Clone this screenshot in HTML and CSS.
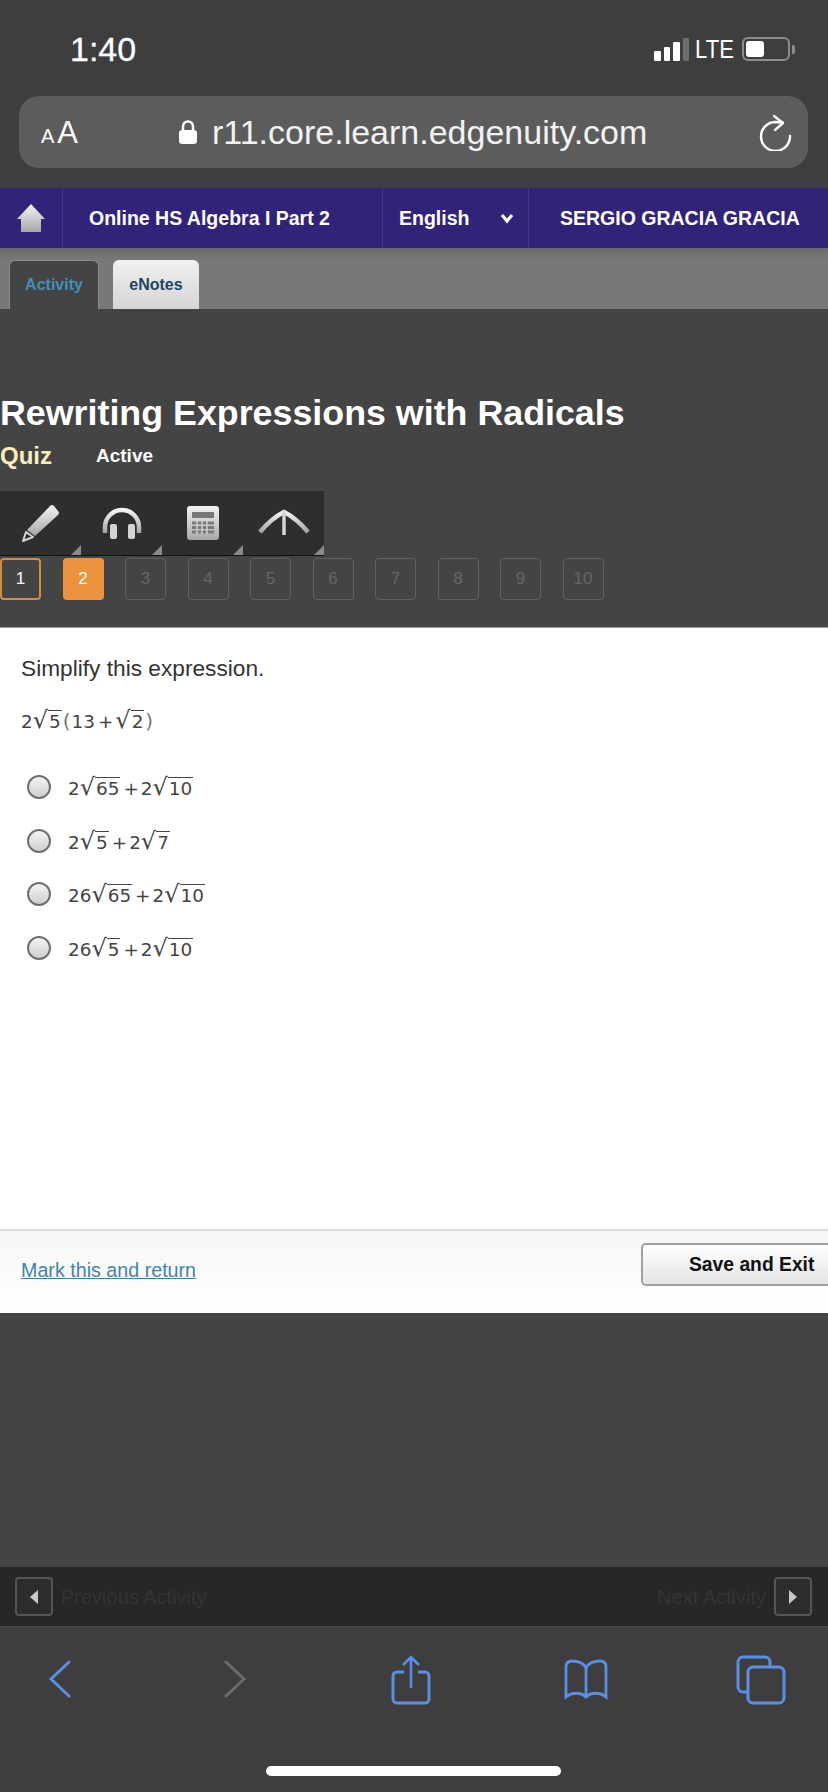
FILE: index.html
```html
<!DOCTYPE html>
<html>

<head>
    <title>Rewriting Expressions with Radicals</title>
    <link rel="stylesheet" href="styles.css">
</head>

<body>
    <svg class="svg-defs" width="0" height="0">
        <defs>
            <linearGradient id="iconFill" x1="0" y1="0" x2="0" y2="1">
                <stop offset="0" stop-color="#f4f4f4"/>
                <stop offset="1" stop-color="#a6a6a6"/>
            </linearGradient>
        </defs>
    </svg>

    <div class="status-bar">
        <div class="time">1:40</div>
        <div class="status-right">
            <div class="signal">
                <span class="bar bar-1"></span>
                <span class="bar bar-2"></span>
                <span class="bar bar-3"></span>
                <span class="bar bar-4"></span>
            </div>
            <div class="lte">LTE</div>
            <div class="battery"><span class="battery-level"></span></div>
            <div class="battery-tip"></div>
        </div>
    </div>

    <div class="address-wrap">
        <div class="address-bar">
            <div class="text-size"><span class="small-a">A</span>A</div>
            <div class="url">
                <svg class="lock" width="20" height="26" viewBox="0 0 20 26">
                    <path d="M5 12V7.500a5 5 0 0 1 10 0V12" fill="none" stroke="#fff" stroke-width="2.500"/>
                    <rect x="1" y="11" width="18" height="14" rx="3" fill="#fff"/>
                </svg>
                <span>r11.core.learn.edgenuity.com</span>
            </div>
            <svg class="reload" width="36" height="38" viewBox="0 0 36 38">
                <path d="M33 23A14.500 14.500 0 1 1 18 9L25.500 9.500" fill="none" stroke="#fff" stroke-width="2.400" stroke-linecap="round"/>
                <path d="M17 3L26 10L18 17" fill="none" stroke="#fff" stroke-width="2.400" stroke-linecap="round" stroke-linejoin="round"/>
            </svg>
        </div>
    </div>

    <div class="top-nav">
        <div class="nav-home">
            <svg width="28" height="30" viewBox="0 0 28 30">
                <path d="M14 1L28 16H24V29H4V16H0Z" fill="url(#iconFill)"/>
            </svg>
        </div>
        <div class="nav-course">Online HS Algebra I Part 2</div>
        <div class="nav-lang">
            <span>English</span>
            <svg width="14" height="11" viewBox="0 0 14 11">
                <path d="M2 2l5 6l5 -6" fill="none" stroke="#fff" stroke-width="3.200"/>
            </svg>
        </div>
        <div class="nav-user">SERGIO GRACIA GRACIA</div>
    </div>

    <div class="tab-band">
        <div class="tab tab-active">Activity</div>
        <div class="tab tab-notes">eNotes</div>
    </div>

    <div class="activity-head">
        <h1>Rewriting Expressions with Radicals</h1>
        <div class="sub-line">
            <span class="quiz">Quiz</span>
            <span class="active-label">Active</span>
        </div>

        <div class="toolbar">
            <div class="tool">
                <svg width="40" height="38" viewBox="0 0 40 38">
                    <path d="M29 2Q31 0 33 2L37 7Q39 9 37 11L14 32L6 26Z" fill="url(#iconFill)"/>
                    <path d="M5 28L12 33L2 37Z" fill="#2e2e2e" stroke="#d4d4d4" stroke-width="2" stroke-linejoin="round"/>
                </svg>
            </div>
            <div class="tool">
                <svg width="40" height="33" viewBox="0 0 40 33">
                    <path d="M3 26V20a17 17 0 0 1 34 0V26" fill="none" stroke="url(#iconFill)" stroke-width="4.500"/>
                    <rect x="8" y="17" width="7" height="15" rx="2" fill="#d4d4d4"/>
                    <rect x="26" y="17" width="7" height="15" rx="2" fill="#d4d4d4"/>
                </svg>
            </div>
            <div class="tool">
                <svg width="32" height="34" viewBox="0 0 32 34">
                    <rect width="32" height="34" rx="3" fill="url(#iconFill)"/>
                    <rect x="5" y="6" width="22" height="6" fill="#777"/>
                    <path d="M5 17h22M5 21.500h22M5 26h22" stroke="#7a7a7a" stroke-width="3"/>
                    <path d="M10 15v13M15 15v13M20 15v13" stroke="#d0d0d0" stroke-width="1.500"/>
                </svg>
            </div>
            <div class="tool">
                <svg width="52" height="28" viewBox="0 0 52 28">
                    <path d="M2 23Q14 9 26 3Q38 9 50 23" fill="none" stroke="url(#iconFill)" stroke-width="4.500"/>
                    <path d="M26 1V26" stroke="#d6d6d6" stroke-width="3.500"/>
                </svg>
            </div>
        </div>

        <div class="pager">
            <div class="page page-seen">1</div>
            <div class="page page-current">2</div>
            <div class="page">3</div>
            <div class="page">4</div>
            <div class="page">5</div>
            <div class="page">6</div>
            <div class="page">7</div>
            <div class="page">8</div>
            <div class="page">9</div>
            <div class="page">10</div>
        </div>
    </div>

    <div class="question">
        <p class="prompt">Simplify this expression.</p>
        <div class="math expression">2<span class="root">√</span><span class="radicand">5</span><span class="paren">(</span>13<span class="plus">+</span><span class="root">√</span><span class="radicand">2</span><span class="paren">)</span></div>

        <div class="choice">
            <span class="radio"></span>
            <div class="math">2<span class="root">√</span><span class="radicand">65</span><span class="plus">+</span>2<span class="root">√</span><span class="radicand">10</span></div>
        </div>
        <div class="choice">
            <span class="radio"></span>
            <div class="math">2<span class="root">√</span><span class="radicand">5</span><span class="plus">+</span>2<span class="root">√</span><span class="radicand">7</span></div>
        </div>
        <div class="choice">
            <span class="radio"></span>
            <div class="math">26<span class="root">√</span><span class="radicand">65</span><span class="plus">+</span>2<span class="root">√</span><span class="radicand">10</span></div>
        </div>
        <div class="choice">
            <span class="radio"></span>
            <div class="math">26<span class="root">√</span><span class="radicand">5</span><span class="plus">+</span>2<span class="root">√</span><span class="radicand">10</span></div>
        </div>
    </div>

    <div class="question-foot">
        <a class="mark-link" href="#">Mark this and return</a>
        <div class="save-btn">Save and Exit</div>
    </div>

    <div class="spacer"></div>

    <div class="activity-nav">
        <div class="nav-side">
            <div class="arrow-btn"><span class="tri tri-left"></span></div>
            <span class="nav-text">Previous Activity</span>
        </div>
        <div class="nav-side">
            <span class="nav-text">Next Activity</span>
            <div class="arrow-btn"><span class="tri tri-right"></span></div>
        </div>
    </div>

    <div class="browser-bar">
        <div class="browser-icons">
            <div class="icon-cell">
                <svg width="24" height="40" viewBox="0 0 24 40">
                    <path d="M21 2L3 19L21 36" fill="none" stroke="#5b8fe6" stroke-width="3" stroke-linecap="round"/>
                </svg>
            </div>
            <div class="icon-cell">
                <svg width="24" height="40" viewBox="0 0 24 40">
                    <path d="M3 2L21 19L3 36" fill="none" stroke="#6b6b6b" stroke-width="3" stroke-linecap="round"/>
                </svg>
            </div>
            <div class="icon-cell">
                <svg width="40" height="50" viewBox="0 0 40 50">
                    <path d="M13 17H6a4 4 0 0 0 -4 4V44a4 4 0 0 0 4 4H34a4 4 0 0 0 4 -4V21a4 4 0 0 0 -4 -4H27" fill="none" stroke="#5b8fe6" stroke-width="3"/>
                    <path d="M20 33V3M12 10L20 2L28 10" fill="none" stroke="#5b8fe6" stroke-width="2.600"/>
                </svg>
            </div>
            <div class="icon-cell">
                <svg width="46" height="42" viewBox="0 0 46 42">
                    <path d="M23 9C20 3 14 2 9 2C5 2 3 4 3 8V38C9 33 18 33 23 38C28 33 37 33 43 38V8C43 4 41 2 37 2C32 2 26 3 23 9V38" fill="none" stroke="#5b8fe6" stroke-width="2.800"/>
                </svg>
            </div>
            <div class="icon-cell">
                <svg width="50" height="50" viewBox="0 0 50 50">
                    <path d="M11 37H7a5 5 0 0 1 -5 -5V7a5 5 0 0 1 5 -5H29a5 5 0 0 1 5 5V12" fill="none" stroke="#5b8fe6" stroke-width="3"/>
                    <rect x="12" y="12" width="36" height="36" rx="5" fill="none" stroke="#5b8fe6" stroke-width="3"/>
                </svg>
            </div>
        </div>
        <div class="home-indicator"></div>
    </div>
</body>

</html>
```

FILE: styles.css
```css
* {
    box-sizing: border-box;
}

body {
    margin: 0;
    width: 828px;
    height: 1792px;
    display: flex;
    flex-direction: column;
    background-color: #444444;
    color: #ffffff;
    font-family: "Liberation Sans", Arial, sans-serif;
    overflow: hidden;
}

.svg-defs {
    position: absolute;
}

/* phone status bar */
.status-bar {
    height: 96px;
    flex-shrink: 0;
    display: flex;
    justify-content: space-between;
    align-items: center;
    padding: 2px 33px 0 70px;
    background-color: #3e3e3e;
}

.time {
    font-size: 34px;
    -webkit-text-stroke: 0.3px #fff;
}

.status-right {
    display: flex;
    align-items: center;
}

.signal {
    display: flex;
    align-items: flex-end;
    gap: 3px;
    height: 23px;
}

.bar {
    width: 6.500px;
    border-radius: 1px;
    background-color: #fff;
}

.bar-1 {
    height: 10px;
}

.bar-2 {
    height: 14px;
}

.bar-3 {
    height: 19px;
}

.bar-4 {
    height: 23px;
    background-color: #6e6e6e;
}

.lte {
    font-size: 26px;
    margin-left: 6px;
    margin-right: 1px;
    transform: scaleX(0.85);
    transform-origin: left;
}

.battery {
    width: 48px;
    height: 24px;
    border: 2px solid #8c8c8c;
    border-radius: 6px;
    padding: 2px;
}

.battery-level {
    display: block;
    width: 18px;
    height: 16px;
    border-radius: 3px;
    background-color: #fff;
}

.battery-tip {
    width: 3px;
    height: 9px;
    margin-left: 2px;
    border-radius: 0 2px 2px 0;
    background-color: #8c8c8c;
}

/* safari address bar */
.address-wrap {
    height: 92px;
    flex-shrink: 0;
    padding: 0 20px 20px 19px;
    background-color: #3e3e3e;
}

.address-bar {
    height: 72px;
    display: flex;
    align-items: center;
    padding: 0 15px 0 22px;
    border-radius: 20px;
    background-color: #5c5c5c;
}

.text-size {
    width: 137px;
    font-size: 31px;
    padding-top: 2px;
}

.small-a {
    font-size: 20px;
    letter-spacing: 3px;
}

.url {
    flex: 1;
    display: flex;
    align-items: center;
    gap: 14px;
    font-size: 34px;
    color: #f2f2f2;
}

/* course nav */
.top-nav {
    height: 60px;
    flex-shrink: 0;
    display: flex;
    background-color: #32237a;
    font-size: 19.500px;
    font-weight: bold;
}

.nav-home,
.nav-course,
.nav-lang {
    display: flex;
    align-items: center;
    border-right: 1px solid #46398c;
}

.nav-home {
    width: 63px;
    justify-content: center;
}

.nav-course {
    width: 320px;
    padding-left: 26px;
}

.nav-lang {
    width: 146px;
    justify-content: space-between;
    padding: 0 14px 0 16px;
}

.nav-user {
    flex: 1;
    display: flex;
    align-items: center;
    padding-left: 31px;
}

.tab-band {
    height: 61px;
    flex-shrink: 0;
    display: flex;
    align-items: flex-end;
    gap: 14px;
    padding-left: 9px;
    background: linear-gradient(#6a6a6a, #787878 18%);
}

.tab {
    height: 49px;
    display: flex;
    align-items: center;
    justify-content: center;
    border-radius: 6px 6px 0 0;
    font-size: 16px;
    font-weight: bold;
}

.tab-active {
    width: 90px;
    background-color: #444444;
    border: 1px solid #8c8c8c;
    border-bottom: 0;
    color: #3f8fb8;
}

.tab-notes {
    width: 86px;
    background: linear-gradient(#f0f0f0, #d5d5d5);
    color: #1d4560;
}

/* title block */
.activity-head {
    height: 319px;
    flex-shrink: 0;
    padding-top: 84px;
    border-bottom: 1px solid #9a9a9a;
}

h1 {
    margin: 0;
    font-size: 35.800px;
    line-height: 40px;
    font-weight: bold;
}

.sub-line {
    display: flex;
    align-items: center;
    margin-top: 7px;
    height: 32px;
}

.quiz {
    width: 96px;
    font-size: 24px;
    font-weight: bold;
    color: #fbeeb8;
}

.active-label {
    font-size: 19px;
    font-weight: bold;
}

.toolbar {
    width: 324px;
    height: 65px;
    margin-top: 19px;
    display: flex;
    background-color: #2e2e2e;
    border-bottom: 1px solid #111;
}

.tool {
    width: 81px;
    display: flex;
    align-items: center;
    justify-content: center;
    position: relative;
}

/* little grey corner on each tool */
.tool::after {
    content: "";
    position: absolute;
    right: 0;
    bottom: 0;
    border-style: solid;
    border-width: 0 0 10px 10px;
    border-color: transparent transparent #8a8a8a transparent;
}

.pager {
    display: flex;
    gap: 21.500px;
    margin-top: 2px;
}

.page {
    width: 41px;
    height: 42px;
    display: flex;
    align-items: center;
    justify-content: center;
    border: 1px solid #616161;
    border-radius: 4px;
    font-size: 17px;
    color: #666666;
}

.page-seen {
    border: 2px solid #d98a3c;
    color: #ffffff;
}

.page-current {
    border: 0;
    background-color: #ee933d;
    color: #ffffff;
}

/* question */
.question {
    height: 601px;
    flex-shrink: 0;
    padding: 25px 0 0 21px;
    background-color: #ffffff;
    color: #333333;
}

.prompt {
    margin: 0;
    font-size: 22.700px;
    line-height: 30px;
}

.math {
    font-family: "DejaVu Sans", sans-serif;
    font-size: 18.400px;
    color: #444444;
    white-space: pre;
}

.root {
    font-size: 24px;
}

.radicand {
    display: inline-block;
    line-height: 22px;
    padding: 0 1px;
    border-top: 1.500px solid #444444;
}

.plus {
    margin: 0 2px 0 3px;
}

.paren {
    margin: 0 1px;
    font-size: 20px;
    color: #777777;
}

.expression {
    margin-top: 23px;
    margin-bottom: 24.500px;
    height: 30px;
}

.choice {
    height: 53.500px;
    display: flex;
    align-items: center;
    gap: 17px;
    padding-left: 6px;
}

.radio {
    width: 24px;
    height: 24px;
    border: 2px solid #6f6f6f;
    border-radius: 50%;
    background: linear-gradient(#f4f4f4, #cfcfcf);
}

.question-foot {
    height: 84px;
    flex-shrink: 0;
    display: flex;
    justify-content: space-between;
    padding: 12px 0 0 21px;
    border-top: 2px solid #d8d8d8;
    background: linear-gradient(#f6f6f6, #ffffff);
}

.mark-link {
    margin-top: 15px;
    font-size: 19.700px;
    line-height: 24px;
    height: 24px;
    color: #3a87ad;
}

.save-btn {
    width: 187px;
    height: 43px;
    display: flex;
    align-items: center;
    padding-left: 46px;
    border: 2px solid #a0a0a0;
    border-right: 0;
    border-radius: 5px 0 0 5px;
    background: linear-gradient(#ffffff, #e4e4e4);
    color: #111111;
    font-size: 19.300px;
    font-weight: bold;
    white-space: nowrap;
}

.spacer {
    flex: 1;
}

/* previous / next */
.activity-nav {
    height: 59px;
    flex-shrink: 0;
    display: flex;
    justify-content: space-between;
    align-items: center;
    padding: 0 16px 0 15px;
    background-color: #272727;
}

.nav-side {
    display: flex;
    align-items: center;
    gap: 8px;
}

.nav-text {
    font-size: 20px;
    padding-top: 2px;
    color: #343434;
}

.arrow-btn {
    width: 38px;
    height: 39px;
    display: flex;
    align-items: center;
    justify-content: center;
    border: 2px solid #555555;
    border-radius: 4px;
    background-color: #2d2d2d;
}

.tri {
    width: 0;
    height: 0;
    border-style: solid;
}

.tri-left {
    border-width: 7px 8px 7px 0;
    border-color: transparent #c9c9c9 transparent transparent;
}

.tri-right {
    border-width: 7px 0 7px 8px;
    border-color: transparent transparent transparent #c9c9c9;
}

/* safari bottom bar */
.browser-bar {
    height: 166px;
    flex-shrink: 0;
    display: flex;
    flex-direction: column;
    border-top: 1px solid #474747;
    background-color: #3e3e3e;
}

.browser-icons {
    height: 139px;
    display: flex;
    justify-content: space-between;
    align-items: flex-start;
    padding: 28px 42px 0 35px;
}

.icon-cell {
    width: 50px;
    height: 50px;
    display: flex;
    align-items: center;
    justify-content: center;
}

.home-indicator {
    width: 295px;
    height: 10px;
    margin-left: 266px;
    border-radius: 5px;
    background-color: #ffffff;
}
```
